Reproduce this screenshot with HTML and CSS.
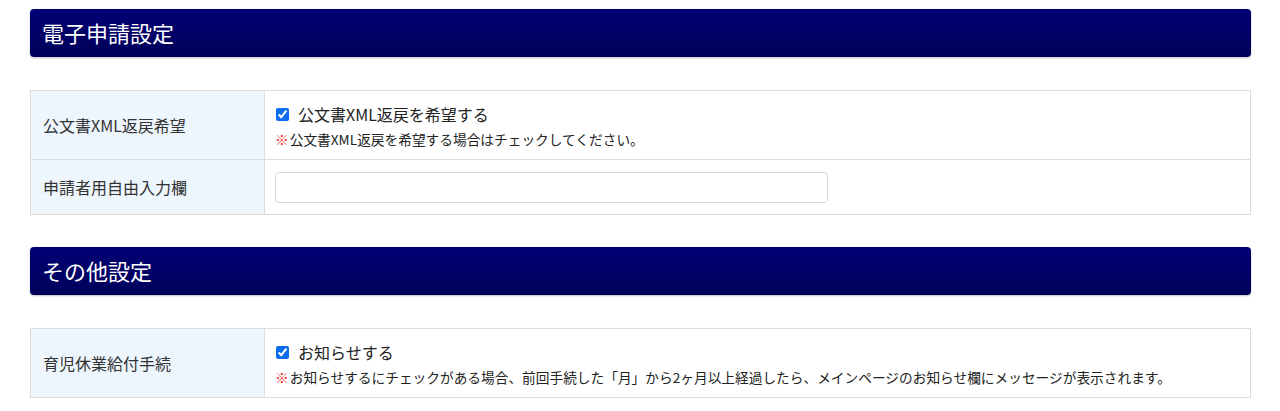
FILE: index.html
```html
<!DOCTYPE html>
<html lang="ja">
<head>
    <meta charset="UTF-8">
    <meta name="viewport" content="width=device-width, initial-scale=1.0">
    <title>電子申請設定</title>
    <link rel="stylesheet" href="styles.css">
</head>
<body>
    <div class="container">
        <!-- 電子申請設定 -->
        <h2 class="section-title">電子申請設定</h2>
        <table class="form-table">
            <tr class="row-tall">
                <th>公文書XML返戻希望</th>
                <td>
                    <label class="check-line">
                        <input type="checkbox" checked>
                        <span>公文書XML返戻を希望する</span>
                    </label>
                    <p class="note"><span class="mark">※</span>公文書XML返戻を希望する場合はチェックしてください。</p>
                </td>
            </tr>
            <tr class="row-input">
                <th>申請者用自由入力欄</th>
                <td><input type="text" class="text-input"></td>
            </tr>
        </table>

        <!-- その他設定 -->
        <h2 class="section-title">その他設定</h2>
        <table class="form-table">
            <tr class="row-tall">
                <th>育児休業給付手続</th>
                <td>
                    <label class="check-line">
                        <input type="checkbox" checked>
                        <span>お知らせする</span>
                    </label>
                    <p class="note"><span class="mark">※</span>お知らせするにチェックがある場合、前回手続した「月」から2ヶ月以上経過したら、メインページのお知らせ欄にメッセージが表示されます。</p>
                </td>
            </tr>
        </table>
    </div>
</body>
</html>
```

FILE: styles.css
```css
/* 設定画面 */
body {
    margin: 0;
    background: #fff;
    font-family: "Noto Sans CJK JP", "Noto Sans", sans-serif;
    color: #333;
}
.container {
    margin: 0 29px 0 30px;
    padding-top: 9px;
}
.section-title {
    margin: 0 0 33px;
    height: 48px;
    line-height: 46px;
    padding-left: 12px;
    font-size: 22px;
    font-weight: normal;
    color: #fff;
    background: linear-gradient(#000075, #00005a);
    border-radius: 4px;
    box-shadow: 0 1px 2px rgba(0, 0, 60, 0.25);
}
.form-table {
    width: 100%;
    border-collapse: collapse;
    margin-bottom: 32px;
}
.form-table th,
.form-table td {
    border: 1px solid #dcdcdc;
    vertical-align: middle;
}
.form-table th {
    width: 221px;
    padding: 0 0 0 12px;
    background: #edf5fd;
    font-size: 16px;
    font-weight: normal;
    text-align: left;
    color: #333;
}
.form-table td {
    padding: 0 0 0 10px;
}
.row-tall td {
    height: 67px;
    padding-top: 1px;
}
.row-input td {
    height: 54px;
}
.check-line {
    display: flex;
    align-items: center;
    font-size: 16px;
    line-height: 22px;
    color: #222;
}
.check-line input {
    margin: 0 9px 0 1px;
    width: 13px;
    height: 13px;
    accent-color: #0b6cf0;
}
.note {
    margin: 5px 0 0;
    font-size: 13.7px;
    line-height: 18px;
    color: #222;
}
.mark {
    color: #f01818;
    margin-right: 1px;
}
.text-input {
    display: block;
    width: 553px;
    height: 31px;
    box-sizing: border-box;
    border: 1px solid #d8d8d8;
    border-radius: 4px;
    padding: 4px 8px;
    font-size: 14px;
}
```
